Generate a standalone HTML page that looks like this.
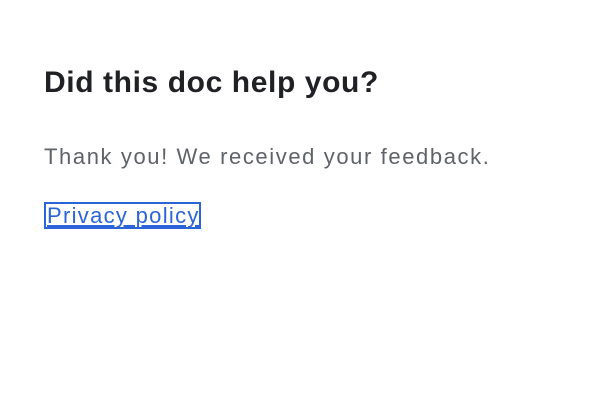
<!DOCTYPE html>
<html><head><meta charset="utf-8"><style>
html,body{margin:0;padding:0;background:#fff;width:594px;height:412px;overflow:hidden;font-family:"Liberation Sans",Arial,sans-serif;}
h1{position:absolute;left:44px;top:65px;margin:0;font-size:30px;font-weight:bold;color:#202124;line-height:36px;letter-spacing:0.6px;}
p{position:absolute;left:44px;top:143px;margin:0;font-size:22px;color:#5f6368;line-height:28px;letter-spacing:1.6px;}
a{position:absolute;left:44px;top:202px;box-sizing:border-box;width:157px;height:27px;border:2px solid #2b64d6;color:#2b64d6;font-size:22px;line-height:23px;padding-left:1px;text-decoration:underline;white-space:nowrap;overflow:hidden;letter-spacing:1.3px;}
</style></head><body>
<h1>Did this doc help you?</h1>
<p>Thank you! We received your feedback.</p>
<a>Privacy policy</a>
</body></html>
